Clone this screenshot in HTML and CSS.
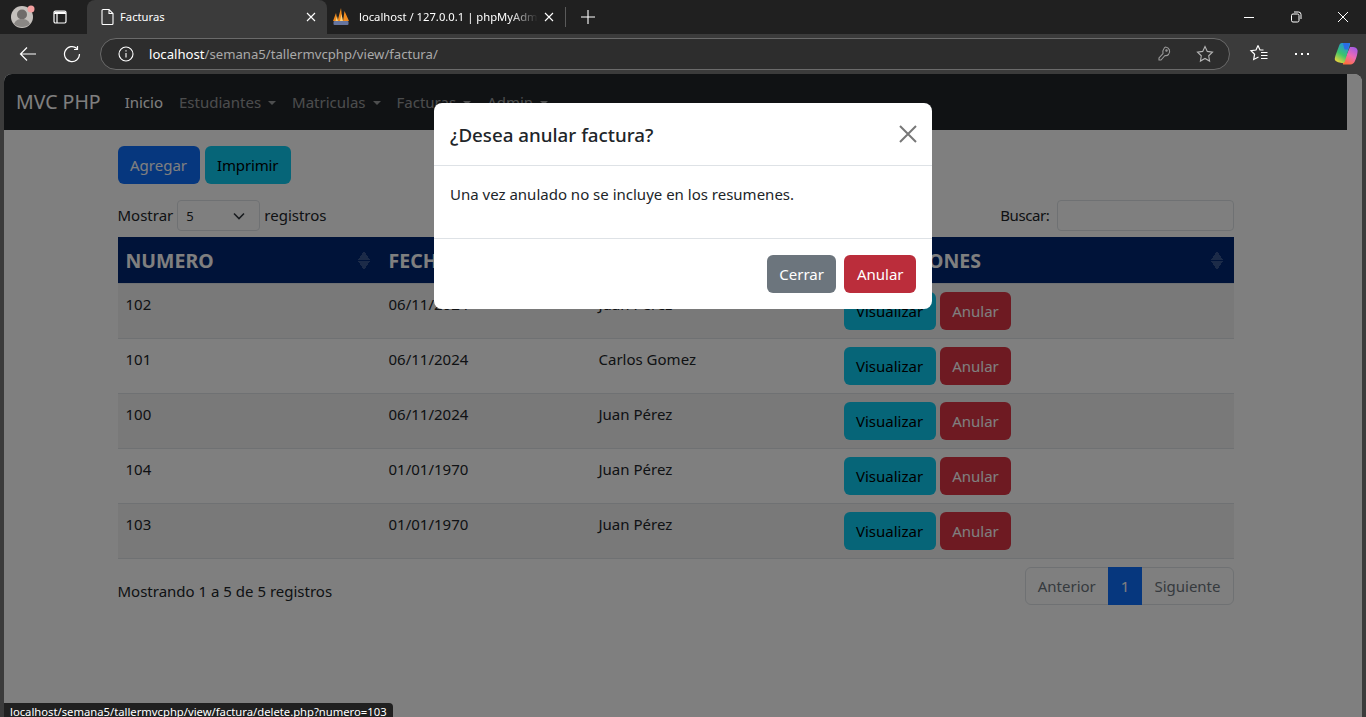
FILE: index.html
```html
<!DOCTYPE html>
<html lang="es">
<head>
    <meta charset="UTF-8">
    <meta name="viewport" content="width=device-width, initial-scale=1.0">
    <title>Facturas</title>
    <link rel="stylesheet" href="styles.css">
</head>
<body>
    <div class="tabstrip">
        <div class="profile">
            <svg width="24" height="24" viewBox="0 0 24 24">
                <circle cx="11" cy="12" r="11" fill="#c4c0bc"/>
                <circle cx="11" cy="9.5" r="5" fill="#6f6c6a"/>
                <path d="M3 19c1.5-4 4.500-5 8-5s6.500 1 8 5c-2 2-5 3-8 3s-6-1-8-3z" fill="#8a8784"/>
                <circle cx="20" cy="4" r="3.500" fill="#f4a0a0"/>
            </svg>
        </div>
        <div class="tab-toggle">
            <svg width="16" height="16" viewBox="0 0 16 16" fill="none" stroke="#fff" stroke-width="1.200">
                <rect x="2" y="2" width="12" height="12" rx="1.500"/>
                <path d="M5 5v9M2 4.500h12" />
                <path d="M2.500 3.500h11" stroke-width="2"/>
            </svg>
        </div>
        <div class="tab tab-active">
            <svg class="tab-icon" width="16" height="18" viewBox="0 0 16 18" fill="none" stroke="#fff" stroke-width="1.100">
                <path d="M3 1.500h6l4 4v10a1 1 0 0 1-1 1H3a1 1 0 0 1-1-1v-13a1 1 0 0 1 1-1zM9 1.500v4h4"/>
            </svg>
            <span class="tab-title">Facturas</span>
            <svg class="tab-close" width="10" height="10" viewBox="0 0 10 10" stroke="#fff" stroke-width="1.100"><path d="M1 1l8 8M9 1l-8 8"/></svg>
        </div>
        <div class="tab tab-other">
            <svg class="tab-icon" width="18" height="18" viewBox="0 0 18 18">
                <path d="M1 13l3-8 1.500 8zM5.500 13L9 0l1.500 13zM11 13l1.500-10L17 13z" fill="#f08a1d"/>
                <path d="M3.500 13l1.500-5 1 5zM8 13l1.500-7 1.500 7z" fill="#ffd27a"/>
                <rect x="1.500" y="13" width="15" height="4" rx="1" fill="#66759f"/>
            </svg>
            <span class="tab-title tab-fade">localhost / 127.0.0.1 | phpMyAdmin</span>
            <svg class="tab-close" width="10" height="10" viewBox="0 0 10 10" stroke="#fff" stroke-width="1.100"><path d="M1 1l8 8M9 1l-8 8"/></svg>
        </div>
        <div class="tab-sep"></div>
        <svg class="new-tab" width="16" height="16" viewBox="0 0 16 16" stroke="#fff" stroke-width="1.100"><path d="M8 1v14M1 8h14"/></svg>
        <div class="win-controls">
            <svg width="12" height="12" viewBox="0 0 12 12" stroke="#fff" stroke-width="1"><path d="M1 6.500h10"/></svg>
            <svg width="12" height="12" viewBox="0 0 12 12" fill="none" stroke="#fff" stroke-width="1"><rect x="1.500" y="3" width="7.500" height="8" rx="1.500"/><path d="M4 1h4.500A2.500 2.500 0 0 1 11 3.500V8"/></svg>
            <svg width="12" height="12" viewBox="0 0 12 12" stroke="#fff" stroke-width="1"><path d="M1 1l10 10M11 1L1 11"/></svg>
        </div>
    </div>

    <div class="toolbar">
        <svg class="tool-back" width="18" height="16" viewBox="0 0 18 16" fill="none" stroke="#fff" stroke-width="1.200"><path d="M17 8H1.500M8 1.500L1.500 8 8 14.500"/></svg>
        <svg class="tool-reload" width="18" height="18" viewBox="0 0 18 18" fill="none" stroke="#fff" stroke-width="1.200"><path d="M14 3.500A7.500 7.500 0 1 0 16.500 9M14.500 1v3.500H11"/></svg>
        <div class="address">
            <svg width="16" height="16" viewBox="0 0 16 16" fill="none" stroke="#fff" stroke-width="1.100"><circle cx="8" cy="8" r="7"/><path d="M8 7v4.500M8 4.200v1.300"/></svg>
            <span class="url"><b>localhost</b>/semana5/tallermvcphp/view/factura/</span>
            <svg class="addr-key" width="16" height="18" viewBox="0 0 16 18" fill="none" stroke="#9a9a9a" stroke-width="1.100"><path d="M9.500 2a4.500 4.500 0 0 1 3 7.500c-1 1-2.300 1.300-3.500 1L5 15H3v-2l4-4.500c-.5-1.500-.2-3.300 1-5 .4-.7 .9-1.500 1.500-1.500z"/><circle cx="10.500" cy="5.500" r=".7"/></svg>
            <svg class="addr-star" width="18" height="18" viewBox="0 0 18 18" fill="none" stroke="#b5b5b5" stroke-width="1.100"><path d="M9 1.500l2.300 4.900 5.200.7-3.800 3.700.9 5.300L9 13.500l-4.600 2.600.9-5.300L1.500 7.100l5.200-.7z"/></svg>
        </div>
        <svg class="tool-favs" width="20" height="20" viewBox="0 0 20 20" fill="none" stroke="#fff" stroke-width="1.200"><path d="M9 1.500l2 4.500h3.500M9 1.500L7 6l-5 .7 3.600 3.500-.9 5.300 4.800-2.500"/><path d="M12 8.500h6.500M12 11.500h6.500M12 14.500h6.500"/></svg>
        <div class="tool-dots"><i></i><i></i><i></i></div>
        <svg class="tool-copilot" width="24" height="24" viewBox="0 0 24 24">
            <defs>
                <linearGradient id="copA" x1="0.700" y1="0" x2="0.200" y2="1"><stop offset="0" stop-color="#1f8fe8"/><stop offset=".55" stop-color="#3cc46a"/><stop offset="1" stop-color="#f5d63a"/></linearGradient>
                <linearGradient id="copB" x1="0.800" y1="0" x2="0.300" y2="1"><stop offset="0" stop-color="#a25be6"/><stop offset=".5" stop-color="#ec6ab4"/><stop offset="1" stop-color="#ff6f3c"/></linearGradient>
            </defs>
            <path d="M16 5h3c2 0 4 1 4.500 3 .5 2-1 8-2.500 11-1 2-2.500 3.500-4.500 3.500H10c-1 0-1.500-.5-1-1.500z" fill="url(#copB)"/>
            <path d="M8 1h7c1 0 1.500.5 1 1.500L11 19c-.5 1.500-1 2-2 2-3 0-7-1-8-3-.5-1 0-3 1-6l3-8c.5-2 1.500-3 3-3z" fill="url(#copA)"/>
            <path d="M9 1h6.500L14 7.500h-3.500z" fill="#2b6de6"/>
        </svg>
    </div>

    <div class="page">
        <nav class="navbar">
            <a class="brand">MVC PHP</a>
            <a class="nav-link nav-active">Inicio</a>
            <a class="nav-link caret">Estudiantes</a>
            <a class="nav-link caret">Matriculas</a>
            <a class="nav-link caret">Facturas</a>
            <a class="nav-link caret">Admin</a>
        </nav>

        <div class="container">
            <div class="top-actions">
                <button class="btn btn-primary">Agregar</button>
                <button class="btn btn-info btn-print">Imprimir</button>
            </div>

            <div class="dt-top">
                <label class="dt-length"><span class="dt-text">Mostrar</span>
                    <span class="fake-select">5
                        <svg width="12" height="8" viewBox="0 0 12 8" fill="none" stroke="#343a40" stroke-width="1.600"><path d="M1 1.500l5 5 5-5"/></svg>
                    </span>
                    <span class="dt-text">registros</span></label>
                <label class="dt-search"><span class="dt-text dt-search-text">Buscar:</span> <span class="fake-input"></span></label>
            </div>

            <table class="data-table">
                <thead>
                    <tr>
                        <th class="col-num">NUMERO<span class="sort"></span></th>
                        <th class="col-date">FECHA<span class="sort"></span></th>
                        <th class="col-client">CLIENTE<span class="sort"></span></th>
                        <th class="col-actions">OPERACIONES<span class="sort"></span></th>
                    </tr>
                </thead>
                <tbody>
                    <tr>
                        <td>102</td><td>06/11/2024</td><td>Juan Pérez</td>
                        <td><div class="row-actions"><button class="btn btn-info">Visualizar</button><button class="btn btn-danger">Anular</button></div></td>
                    </tr>
                    <tr>
                        <td>101</td><td>06/11/2024</td><td>Carlos Gomez</td>
                        <td><div class="row-actions"><button class="btn btn-info">Visualizar</button><button class="btn btn-danger">Anular</button></div></td>
                    </tr>
                    <tr>
                        <td>100</td><td>06/11/2024</td><td>Juan Pérez</td>
                        <td><div class="row-actions"><button class="btn btn-info">Visualizar</button><button class="btn btn-danger">Anular</button></div></td>
                    </tr>
                    <tr>
                        <td>104</td><td>01/01/1970</td><td>Juan Pérez</td>
                        <td><div class="row-actions"><button class="btn btn-info">Visualizar</button><button class="btn btn-danger">Anular</button></div></td>
                    </tr>
                    <tr>
                        <td>103</td><td>01/01/1970</td><td>Juan Pérez</td>
                        <td><div class="row-actions"><button class="btn btn-info">Visualizar</button><button class="btn btn-danger">Anular</button></div></td>
                    </tr>
                </tbody>
            </table>

            <div class="dt-bottom">
                <div class="dt-info">Mostrando 1 a 5 de 5 registros</div>
                <div class="pagination">
                    <a class="page-item page-prev">Anterior</a>
                    <a class="page-item page-current">1</a>
                    <a class="page-item page-next">Siguiente</a>
                </div>
            </div>
        </div>

        <div class="backdrop"></div>

        <div class="modal">
            <div class="modal-header">
                <h5>¿Desea anular factura?</h5>
                <svg class="modal-close" width="18" height="18" viewBox="0 0 18 18" stroke="#777" stroke-width="2"><path d="M1 1l16 16M17 1L1 17"/></svg>
            </div>
            <div class="modal-body">
                <p>Una vez anulado no se incluye en los resumenes.</p>
            </div>
            <div class="modal-footer">
                <button class="btn btn-secondary">Cerrar</button>
                <button class="btn btn-danger-hover">Anular</button>
            </div>
        </div>

        <div class="status">localhost/semana5/tallermvcphp/view/factura/delete.php?numero=103</div>
    </div>
</body>
</html>
```

FILE: styles.css
```css
* {
    box-sizing: border-box;
}

html, body {
    margin: 0;
    height: 717px;
    overflow: hidden;
}

body {
    font-family: "Noto Sans", "Open Sans", sans-serif;
    font-size: 15px;
    line-height: 24px;
    color: #212529;
    background-color: #3b3b3b;
    display: flex;
    flex-direction: column;
}

/* browser chrome */
.tabstrip {
    height: 34px;
    flex: none;
    background-color: #202020;
    display: flex;
    align-items: center;
    color: #fff;
    font-size: 11.250px;
}

.profile {
    width: 50px;
    padding-left: 11px;
    display: flex;
}

.tab-toggle {
    width: 37px;
    display: flex;
    padding-left: 2px;
}

.tab {
    height: 34px;
    display: flex;
    align-items: center;
}

.tab-active {
    width: 240px;
    background-color: #3b3b3b;
    border-radius: 8px 8px 0 0;
    padding: 0 11px 0 13px;
}

.tab-other {
    width: 237px;
    padding: 0 10px 0 5px;
}

.tab-icon {
    flex: none;
}

.tab-title {
    flex: 1;
    padding-left: 4px;
    white-space: nowrap;
    overflow: hidden;
}

.tab-other .tab-title {
    padding-left: 9px;
}

.tab-fade {
    -webkit-mask-image: linear-gradient(to right, #000 85%, transparent 100%);
    mask-image: linear-gradient(to right, #000 85%, transparent 100%);
}

.tab-close {
    flex: none;
    margin-left: 6px;
}

.tab-sep {
    width: 1px;
    height: 20px;
    background-color: #5a5a5a;
    margin-left: 1px;
}

.new-tab {
    margin-left: 14px;
}

.win-controls {
    margin-left: auto;
    display: flex;
    gap: 35px;
    padding-right: 17px;
}

.toolbar {
    height: 40px;
    flex: none;
    background-color: #3b3b3b;
    display: flex;
    align-items: center;
    color: #fff;
    padding-left: 19px;
}

.tool-reload {
    margin-left: 26px;
}

.address {
    width: 1130px;
    height: 32px;
    margin-left: 19px;
    background-color: #2d2d2d;
    border: 1px solid #6a6a6a;
    border-radius: 16px;
    display: flex;
    align-items: center;
    padding: 0 15px 0 17px;
}

.url {
    margin-left: 15px;
    font-size: 13.150px;
    color: #a9a9a9;
    flex: 1;
}

.url b {
    color: #fff;
    font-weight: 400;
}

.addr-star {
    margin-left: 24px;
}

.tool-favs {
    margin-left: 19px;
}

.tool-dots {
    margin-left: 26px;
    width: 14px;
    display: flex;
    justify-content: space-between;
}

.tool-dots i {
    width: 2px;
    height: 2px;
    background-color: #fff;
}

.tool-copilot {
    margin-left: 25px;
}

/* page */
.page {
    position: relative;
    flex: 1;
    margin: 0 4px;
    padding-right: 15px;
    background-color: #fff;
    border-radius: 8px 8px 0 0;
    overflow: hidden;
}

.navbar {
    height: 56px;
    background-color: #212529;
    display: flex;
    align-items: center;
    padding-left: 12px;
}

.brand {
    font-size: 19.500px;
    color: #fff;
    margin-right: 16px;
}

.nav-link {
    color: rgba(255, 255, 255, 0.55);
    padding: 0 8px;
}

.nav-active {
    color: #fff;
}

.caret::after {
    content: "";
    display: inline-block;
    margin-left: 7px;
    vertical-align: 3px;
    border-top: 4.800px solid;
    border-left: 4.800px solid transparent;
    border-right: 4.800px solid transparent;
}

.container {
    width: 1116px;
    margin: 16px auto 0;
}

.top-actions {
    display: flex;
    gap: 5px;
}

.btn {
    height: 38px;
    padding: 0 11.500px;
    font: inherit;
    border: 1px solid transparent;
    border-radius: 6px;
    cursor: pointer;
}

.btn-print {
    letter-spacing: -0.150px;
}

.btn-primary {
    background-color: #0d6efd;
    color: #fff;
}

.btn-info {
    background-color: #0dcaf0;
    color: #000;
}

.btn-danger {
    background-color: #dc3545;
    color: #fff;
}

.btn-danger-hover {
    background-color: #bb2d3b;
    color: #fff;
}

.btn-secondary {
    background-color: #6c757d;
    color: #fff;
}

.dt-top {
    display: flex;
    justify-content: space-between;
    align-items: center;
    margin-top: 16px;
    height: 31px;
}

.dt-length {
    display: flex;
    align-items: center;
    gap: 4px;
}

.dt-text {
    padding-bottom: 2px;
}

.dt-search-text {
    letter-spacing: -0.400px;
}

.fake-select {
    width: 83px;
    height: 31px;
    border: 1px solid #dee2e6;
    border-radius: 4px;
    font-size: 13px;
    padding: 0 14px 0 8px;
    display: flex;
    align-items: center;
    justify-content: space-between;
}

.dt-search {
    display: flex;
    align-items: center;
    gap: 7px;
}

.fake-input {
    width: 177px;
    height: 31px;
    border: 1px solid #dee2e6;
    border-radius: 4px;
}

.data-table {
    width: 100%;
    margin-top: 6px;
    border-collapse: separate;
    border-spacing: 0;
    table-layout: fixed;
}

.data-table th {
    position: relative;
    height: 47px;
    padding: 2px 8px 0;
    background-color: #002672;
    border-bottom: 1px solid #dee2e6;
    color: #fff;
    font-size: 19.500px;
    font-weight: 700;
    text-align: left;
}

.col-num {
    width: 263px;
}

.col-date {
    width: 210px;
}

.col-client {
    width: 245px;
}

.sort {
    position: absolute;
    right: 11px;
    top: 14px;
    width: 12px;
    height: 19px;
    opacity: 0.22;
    background:
        linear-gradient(to bottom right, transparent 50%, #fff 50%) left top / 6px 9px no-repeat,
        linear-gradient(to bottom left, transparent 50%, #fff 50%) right top / 6px 9px no-repeat,
        linear-gradient(to top right, transparent 50%, #fff 50%) left bottom / 6px 9px no-repeat,
        linear-gradient(to top left, transparent 50%, #fff 50%) right bottom / 6px 9px no-repeat;
}

.data-table td {
    padding: 8px;
    vertical-align: top;
    border-bottom: 1px solid #dee2e6;
}

.data-table tbody tr:nth-child(odd) td {
    background-color: #f2f2f2;
}

.row-actions {
    display: flex;
    gap: 4px;
}

.dt-bottom {
    display: flex;
    justify-content: space-between;
    margin-top: 8px;
}

.dt-info {
    padding-top: 12px;
}

.pagination {
    display: flex;
    height: 38px;
    border: 1px solid #dee2e6;
    border-radius: 6px;
}

.page-item {
    padding: 6px 12px;
    color: #6c757d;
}

.page-current {
    background-color: #0d6efd;
    color: #fff;
    margin: -1px 0;
    padding: 7px 13px;
}

/* modal over the page */
.backdrop {
    position: absolute;
    inset: 0;
    background-color: rgba(0, 0, 0, 0.5);
}

.modal {
    position: absolute;
    top: 29px;
    left: 430px;
    width: 498px;
    background-color: #fff;
    border-radius: 8px;
}

.modal-header {
    height: 63px;
    padding: 17px 16px 15px;
    border-bottom: 1px solid #dee2e6;
    display: flex;
    align-items: center;
    justify-content: space-between;
}

.modal-header h5 {
    margin: 0;
    font-size: 18.750px;
    line-height: 30px;
    font-weight: 500;
}

.modal-close {
    margin-right: -1px;
    margin-top: -2px;
}

.modal-body {
    padding: 16px;
}

.modal-body p {
    margin: 0 0 16px;
}

.modal-footer {
    border-top: 1px solid #dee2e6;
    padding: 16px;
    display: flex;
    justify-content: flex-end;
    gap: 8px;
}

.status {
    position: absolute;
    left: 0;
    bottom: 0;
    width: 389px;
    height: 14px;
    background-color: #202020;
    border-radius: 0 4px 0 0;
    color: #fff;
    font-size: 11.250px;
    line-height: 17px;
    padding-left: 6px;
    white-space: nowrap;
    overflow: hidden;
}
```
